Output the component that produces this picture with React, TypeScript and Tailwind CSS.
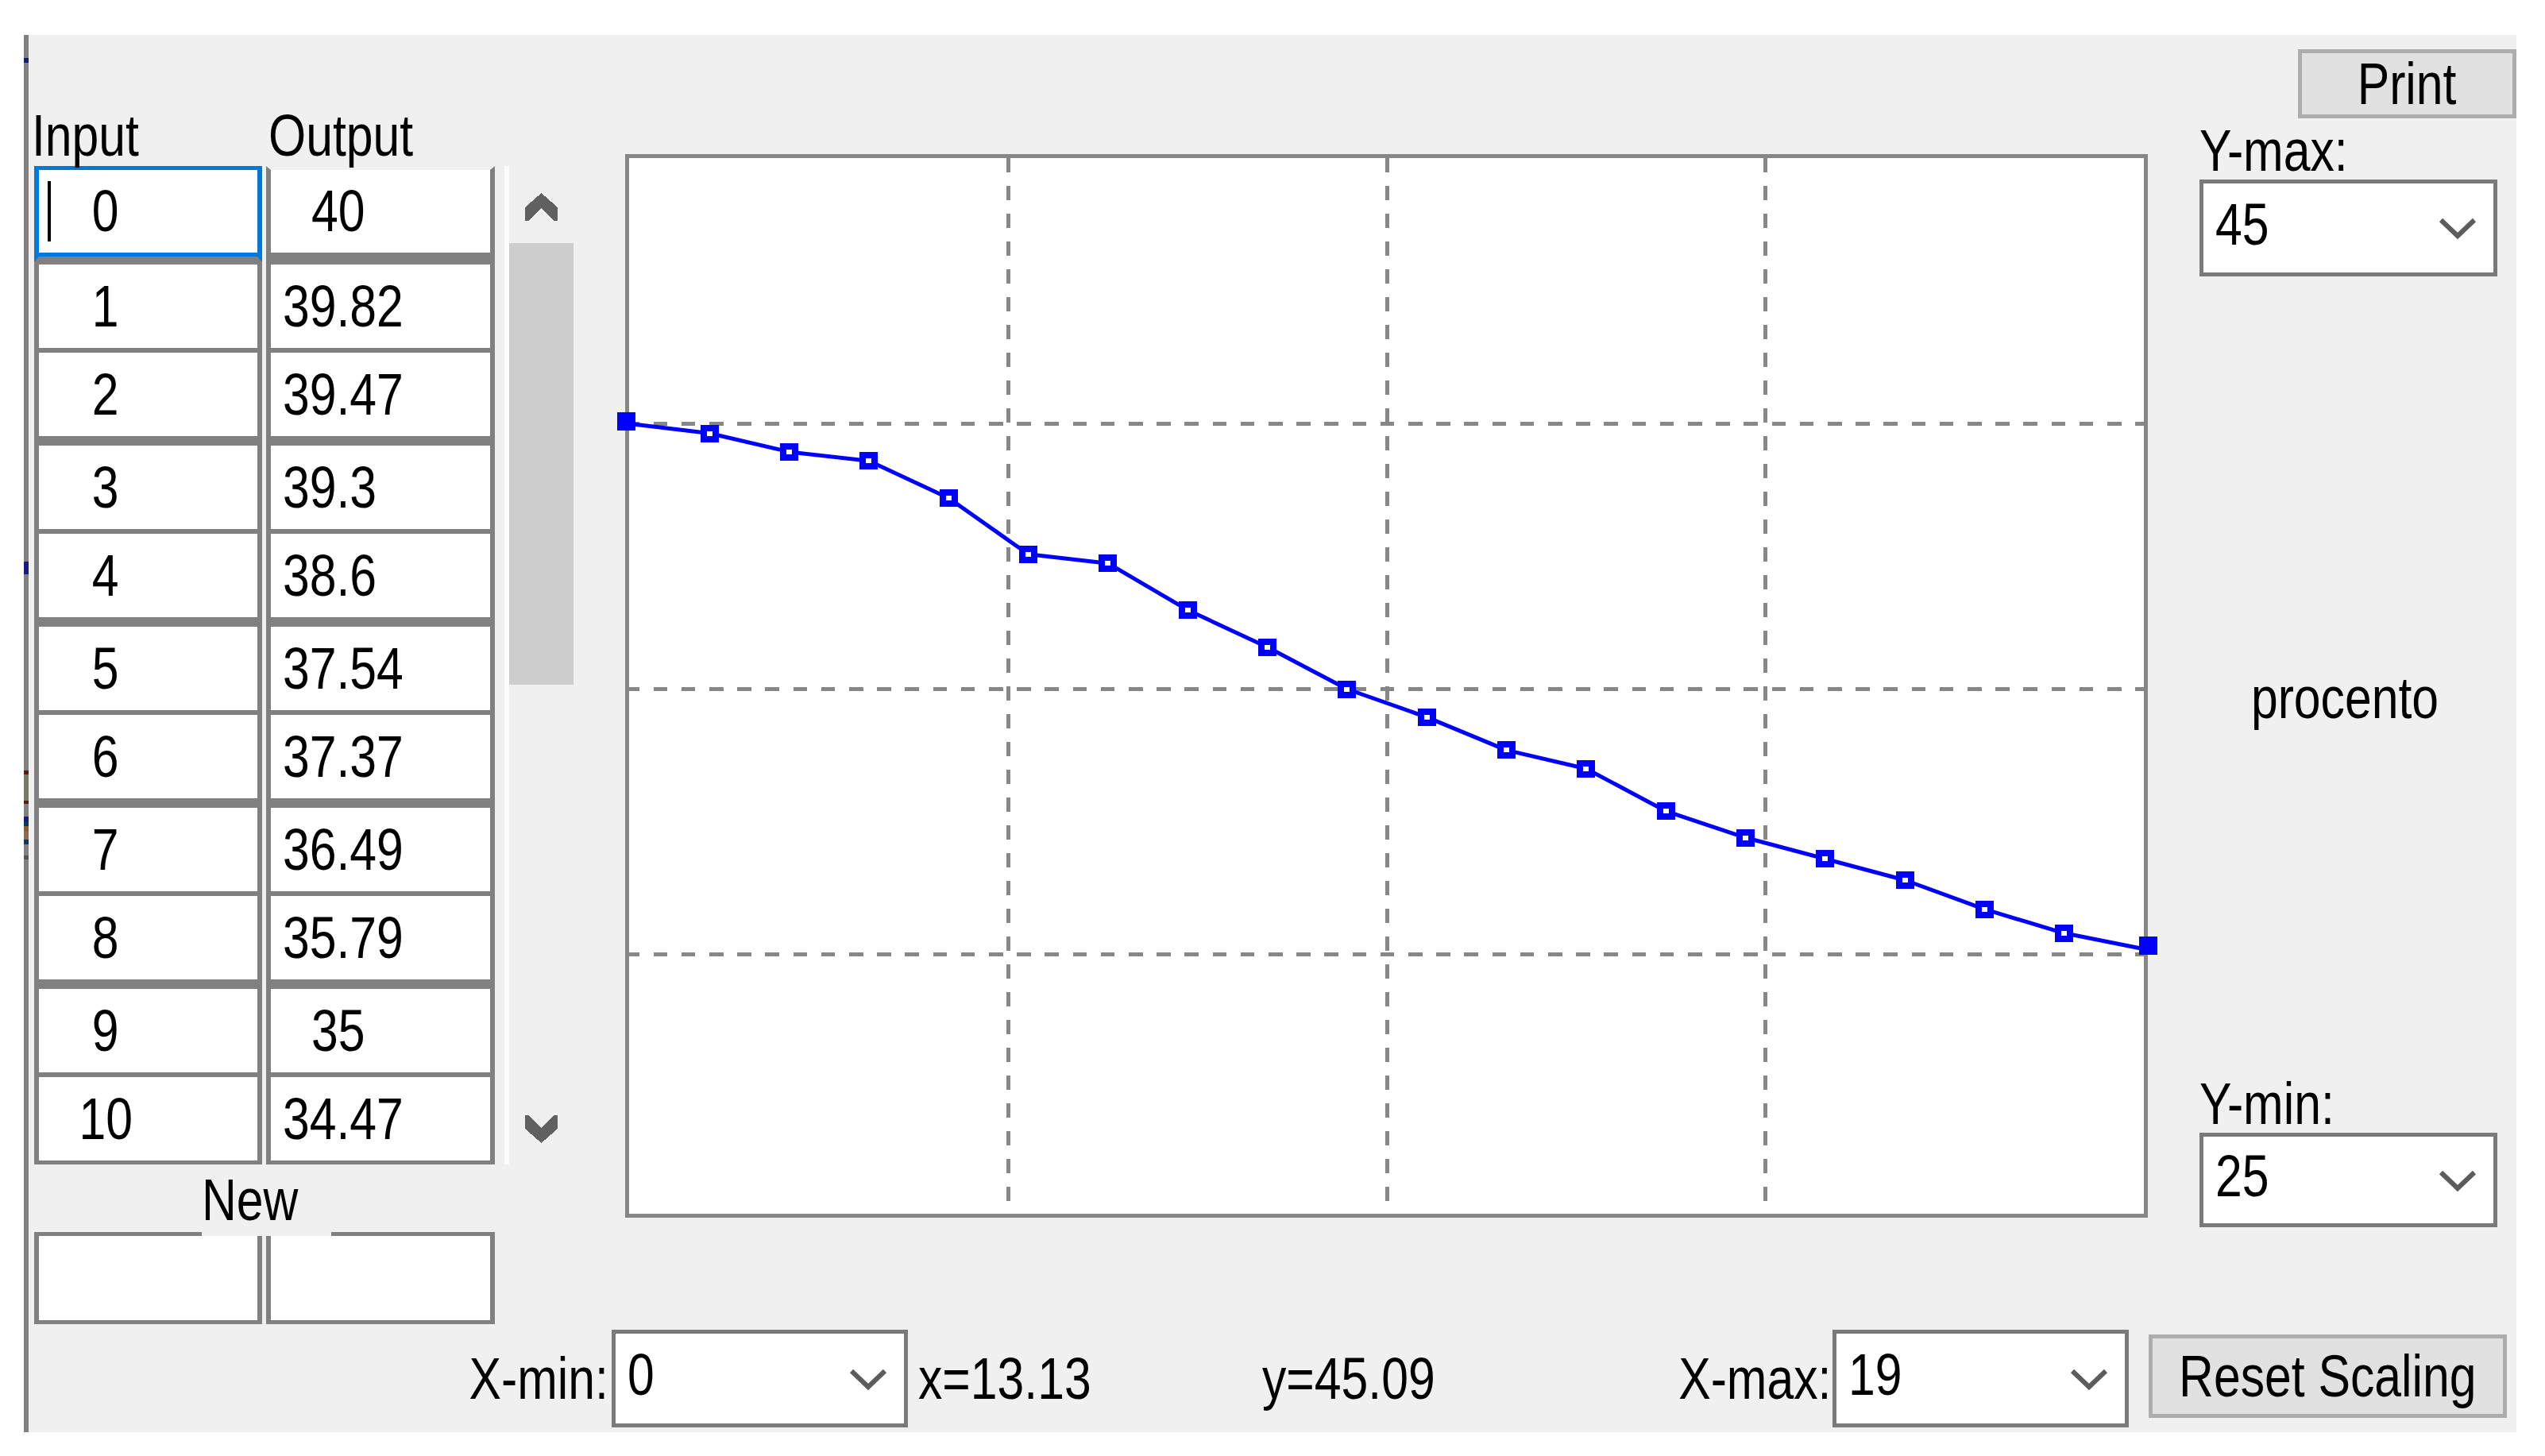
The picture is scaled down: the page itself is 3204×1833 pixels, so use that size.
import React from "react";

const FONT =
  "font-['Liberation_Sans','Arimo',Arial,sans-serif] text-[74px] leading-[86px] text-black";

type Align = "l" | "c" | "r";

function T({ children, a = "l" }: { children: React.ReactNode; a?: Align }) {
  const o = a === "l" ? "origin-left" : a === "c" ? "origin-center" : "origin-right";
  return (
    <span className={`inline-block whitespace-nowrap scale-x-[0.82] ${o}`}>{children}</span>
  );
}

const rows: [string, string][] = [
  ["0", "40"],
  ["1", "39.82"],
  ["2", "39.47"],
  ["3", "39.3"],
  ["4", "38.6"],
  ["5", "37.54"],
  ["6", "37.37"],
  ["7", "36.49"],
  ["8", "35.79"],
  ["9", "35"],
  ["10", "34.47"],
];

const values = [
  40, 39.82, 39.47, 39.3, 38.6, 37.54, 37.37, 36.49, 35.79, 35, 34.47, 33.85,
  33.5, 32.7, 32.2, 31.8, 31.4, 30.85, 30.4, 30.1,
];

const px = (i: number) => 1 + (i * 1906) / 19;
const py = (v: number) => 668.5 + (35 - v) * 66.8;

const strip: [string, string][] = [
  ["h-[29px]", "bg-[#808080]"],
  ["h-[6px]", "bg-[#1a1a80]"],
  ["h-[628px]", "bg-[#808080]"],
  ["h-[16px]", "bg-[#1a1a80]"],
  ["h-[247px]", "bg-[#808080]"],
  ["h-[5px]", "bg-[#5a1a1a]"],
  ["h-[33px]", "bg-[#7a7a62]"],
  ["h-[4px]", "bg-[#5a1a1a]"],
  ["h-[16px]", "bg-[#808080]"],
  ["h-[6px]", "bg-[#1a1a80]"],
  ["h-[6px]", "bg-[#0a3a5a]"],
  ["h-[6px]", "bg-[#8a5a30]"],
  ["h-[11px]", "bg-[#906a50]"],
  ["h-[6px]", "bg-[#0a3a5a]"],
  ["h-[14px]", "bg-[#808080]"],
  ["h-[5px]", "bg-[#555555]"],
  ["flex-1", "bg-[#808080]"],
];

function rowCellClass(i: number) {
  if (i === 10) return "h-[113px] border-t-[3px] border-b-[5px]";
  if (i % 2 === 0) return "h-[117px] border-t-[3px] border-b-[9px]";
  return "h-[111px] border-t-[3px] border-b-[3px]";
}

function Chevron() {
  return (
    <svg width="50" height="30" viewBox="0 0 50 30" className="block shrink-0">
      <polyline
        points="4,5 25,25 46,5"
        fill="none"
        stroke="#5c5c5c"
        strokeWidth="6"
        strokeLinejoin="miter"
      />
    </svg>
  );
}

function ScrollArrow({ up }: { up: boolean }) {
  return (
    <svg width="41" height="35" viewBox="0 0 41 35" className="block">
      {up ? (
        <polygon
          points="20.5,0 41,18 41,35 36,35 20.5,19 5,35 0,35 0,18"
          fill="#606060"
          shapeRendering="crispEdges"
        />
      ) : (
        <polygon
          points="0,0 5,0 20.5,16 36,0 41,0 41,17 20.5,35 0,17"
          fill="#606060"
          shapeRendering="crispEdges"
        />
      )}
    </svg>
  );
}

function Chart() {
  const pts = values.map((v, i) => `${px(i)},${py(v)}`).join(" ");
  const vx = [px(4.75), px(9.5), px(14.25)];
  const hy = [py(40), py(35), py(30)];
  return (
    <div className="ml-[65px] mt-[150px] w-[1917px] h-[1339px] border-[5px] border-[#868686] bg-white shrink-0">
      <svg width="1907" height="1329" className="block overflow-visible">
        {vx.map((x, k) => (
          <line
            key={`v${k}`}
            x1={x}
            y1={0}
            x2={x}
            y2={1329}
            stroke="#878787"
            strokeWidth="5"
            strokeDasharray="17.5 17.5"
            shapeRendering="crispEdges"
          />
        ))}
        {hy.map((y, k) => (
          <line
            key={`h${k}`}
            x1={0}
            y1={y}
            x2={1907}
            y2={y}
            stroke="#878787"
            strokeWidth="5"
            strokeDasharray="17.6 17.6"
            strokeDashoffset="4.6"
            shapeRendering="crispEdges"
          />
        ))}
        <polyline
          points={pts}
          fill="none"
          stroke="#0000ff"
          strokeWidth="5"
          strokeLinejoin="round"
        />
        {values.map((v, i) => {
          const x = px(i);
          const y = py(v);
          if (i === 0)
            return (
              <rect
                key={i}
                x={x - 16.5}
                y={y - 14.5}
                width="23"
                height="23"
                fill="#0000ff"
                shapeRendering="crispEdges"
              />
            );
          if (i === values.length - 1)
            return (
              <rect
                key={i}
                x={x - 6.5}
                y={y - 15.5}
                width="23"
                height="23"
                fill="#0000ff"
                shapeRendering="crispEdges"
              />
            );
          return (
            <rect
              key={i}
              x={x - 7.5}
              y={y - 7}
              width="15"
              height="14"
              fill="white"
              stroke="#0000ff"
              strokeWidth="8"
              shapeRendering="crispEdges"
            />
          );
        })}
      </svg>
    </div>
  );
}

function Combo({ value, w, h }: { value: string; w: string; h: string }) {
  return (
    <div
      className={`${w} ${h} shrink-0 flex items-center justify-between bg-white border-[5px] border-[#7a7a7a] pl-[15px] pr-[20px]`}
    >
      <span className="mb-[9px]">
        <T>{value}</T>
      </span>
      <Chevron />
    </div>
  );
}

export default function App() {
  return (
    <div className={`w-[3204px] h-[1833px] bg-white pt-[44px] pl-[30px] ${FONT}`}>
      <div className="w-[3138px] h-[1759px] bg-[#f0f0f0] flex">
        {/* left border strip */}
        <div className="w-[6px] h-full flex flex-col shrink-0">
          {strip.map(([h, c], k) => (
            <div key={k} className={`${h} ${c} w-full`} />
          ))}
        </div>

        <div className="flex flex-col flex-1">
          {/* top section */}
          <div className="flex h-[1630px]">
            {/* left column: table */}
            <div className="ml-[7px] mt-[84px] flex flex-col shrink-0">
              <div className="h-[81px] flex -ml-[3px]">
                <span className="w-[298px]">
                  <T>Input</T>
                </span>
                <span>
                  <T>Output</T>
                </span>
              </div>
              <div className="flex">
                <div className="flex flex-col">
                  {rows.map(([a, b], i) => (
                    <div key={i} className="flex gap-[5px]">
                      {i === 0 ? (
                        <>
                          <div className="w-[287px] h-[121px] bg-white flex items-center border-t-[5px] border-x-[6px] border-[#0078d7] border-b-[7px] border-b-[#808080] shadow-[inset_0_-5px_0_#0078d7] pb-[5px]">
                            <div className="ml-[11px] w-[4px] h-[76px] bg-black" />
                            <div className="w-[138px] text-center">
                              <T a="c">{a}</T>
                            </div>
                          </div>
                          <div className="w-[288px] h-[121px] bg-white flex items-center border-x-[6px] border-[#808080] border-t-[5px] border-t-[#f0f0f0] border-b-[12px] pl-[51px]">
                            <T>{b}</T>
                          </div>
                        </>
                      ) : (
                        <>
                          <div
                            className={`w-[287px] ${rowCellClass(i)} bg-white flex items-center border-x-[6px] border-[#808080]`}
                          >
                            <div className="w-[168px] text-center">
                              <T a="c">{a}</T>
                            </div>
                          </div>
                          <div
                            className={`w-[288px] ${rowCellClass(i)} bg-white flex items-center border-x-[6px] border-[#808080] ${
                              b.includes(".") ? "pl-[15px]" : "pl-[51px]"
                            }`}
                          >
                            <T>{b}</T>
                          </div>
                        </>
                      )}
                    </div>
                  ))}
                </div>
                {/* scrollbar */}
                <div className="ml-[12px] w-[87px] h-[1257px] border-l-[6px] border-[#fcfcfc] flex flex-col">
                  <div className="h-[97px] flex items-center justify-center pt-[6px]">
                    <ScrollArrow up />
                  </div>
                  <div className="h-[556px] bg-[#cdcdcd]" />
                  <div className="flex-1" />
                  <div className="h-[90px] flex items-center justify-center">
                    <ScrollArrow up={false} />
                  </div>
                </div>
              </div>
              {/* New */}
              <div className="ml-[211px] mt-[2px] w-[163px] h-[88px] bg-[#f0f0f0] relative z-10">
                <T>New</T>
              </div>
              <div className="-mt-[5px] flex gap-[5px]">
                <div className="w-[287px] h-[116px] bg-white border-[5px] border-x-[6px] border-[#808080]" />
                <div className="w-[288px] h-[116px] bg-white border-[5px] border-x-[6px] border-[#808080]" />
              </div>
            </div>

            <Chart />

            {/* right column */}
            <div className="ml-[65px] w-[399px] flex flex-col shrink-0">
              <div className="self-end mt-[18px] w-[275px] h-[87px] border-[5px] border-[#adadad] bg-[#e1e1e1] flex items-center justify-center">
                <T a="c">Print</T>
              </div>
              <div className="-mt-[2px] h-[79px]">
                <T>Y-max:</T>
              </div>
              <Combo value="45" w="w-[375px]" h="h-[122px]" />
              <div className="mt-[488px] h-[86px] w-[366px] text-center">
                <T a="c">procento</T>
              </div>
              <div className="mt-[425px] h-[79px]">
                <T>Y-min:</T>
              </div>
              <Combo value="25" w="w-[375px]" h="h-[119px]" />
            </div>
          </div>

          {/* bottom row */}
          <div className="h-[123px] flex items-center">
            <div className="ml-[486px] w-[244px] text-right shrink-0">
              <T a="r">X-min:</T>
            </div>
            <div className="ml-[4px]">
              <Combo value="0" w="w-[373px]" h="h-[123px]" />
            </div>
            <div className="ml-[13px] w-[433px] shrink-0">
              <T>x=13.13</T>
            </div>
            <div className="w-[415px] shrink-0">
              <T>y=45.09</T>
            </div>
            <div className="w-[301px] text-right shrink-0">
              <T a="r">X-max:</T>
            </div>
            <div className="ml-[2px]">
              <Combo value="19" w="w-[373px]" h="h-[123px]" />
            </div>
            <div className="ml-[25px] self-start mt-[6px] w-[451px] h-[105px] border-[5px] border-[#adadad] bg-[#e1e1e1] flex items-center justify-center shrink-0">
              <T a="c">Reset Scaling</T>
            </div>
          </div>
        </div>
      </div>
    </div>
  );
}
